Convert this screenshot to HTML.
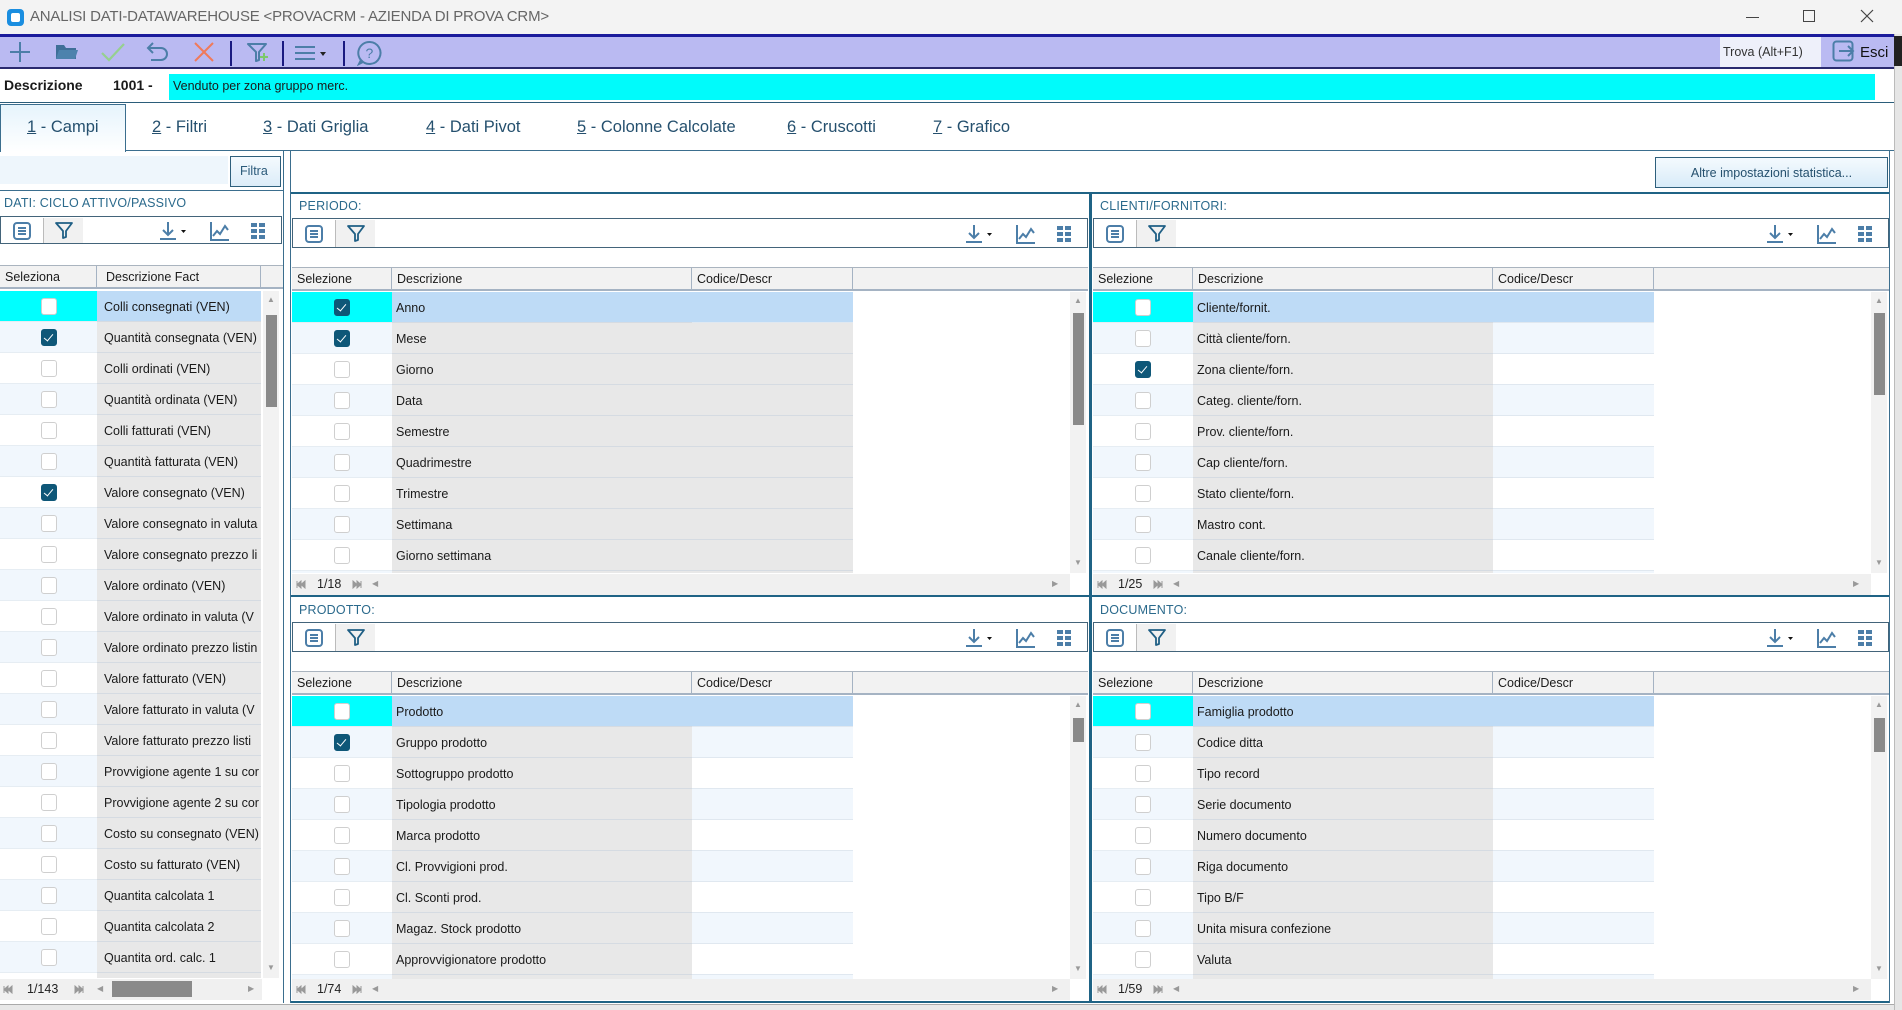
<!DOCTYPE html>
<html><head><meta charset="utf-8">
<style>
*{box-sizing:border-box;margin:0;padding:0}
body{width:1902px;height:1010px;position:relative;overflow:hidden;background:#fff;font-family:Tahoma,"Liberation Sans",sans-serif;font-size:13px;color:#1a1a1a}
.a{position:absolute}
.title{left:0;top:0;width:1902px;height:36px;background:#f3f3f3}
.tb{left:0;top:34px;width:1894px;height:35px;background:#babaf2;border-top:3px solid #1b1b9c;border-bottom:2px solid #2a2a70}
.sep{top:4px;width:2px;height:25px;background:#1a1a80}
.ico{stroke:#4c7ea8;fill:none;stroke-width:2}
.desc{left:0;top:69px;width:1894px;height:34px;border-bottom:1px solid #2b5d7a}
.tabs{left:0;top:103px;width:1894px;height:48px;border-bottom:1px solid #3b6e8e}
.tab{position:absolute;top:15px;font-size:16.5px;color:#25506e}
.tab u{text-decoration:underline}
.lbl{font-size:12.5px;color:#2b6a8c;letter-spacing:.2px}
.ptb{border:1px solid #43647a;height:30px;background:#fff}
.hdr{height:24px;background:#f2f2f2;border-top:1px solid #aab4bf;border-bottom:2px solid #a5b3c3;display:flex;font-size:12.5px}
.hdr span{border-right:1px solid #a5b3c3;padding:4px 5px;height:22px;white-space:nowrap}
.rows .r{display:flex;height:31px;font-size:12.5px}
.rows .r .s{background:#fff;display:flex;align-items:center;justify-content:center;border-bottom:1px solid #e6edf3}
.rows .r:nth-child(even) .s{background:#f1f7fd}
.rows .r .d{background:#e8e8e8;padding:9px 4px 0;white-space:nowrap;overflow:hidden;border-bottom:1px solid #d5dbe2}
.rows .r .c{background:#fff;border-bottom:1px solid #e0e8f0}
.rows .r:nth-child(even) .c{background:#f1f7fd}
.rows .r.g .c{background:#e8e8e8;border-bottom:1px solid #d5dbe2}
.rows .r.h .s{background:#00ffff}
.rows .r.h .d,.rows .r.h .c{background:#bedbf6}
.cb{width:16px;height:17px;border:1.5px solid #cfcfcf;border-radius:3px;background:#fff}
.cb.k{background:#0e5778;border-color:#0e5778;position:relative}
.cb.k:after{content:"";position:absolute;left:4px;top:2px;width:4px;height:8px;border:solid #fff;border-width:0 1.6px 1.6px 0;transform:rotate(40deg)}
.vs{width:16px;background:#f2f2f2}
.vs .th{position:absolute;left:3px;width:11px;background:#8a8a8a}
.pg{height:21px;background:#f0f0f0;font-size:12.5px;color:#222}
.arr{font-size:8px;color:#999}
</style></head><body>

<div class="a title">
 <div class="a" style="left:7px;top:9px;width:17px;height:17px;background:#1a8ee0;border-radius:4px"><div class="a" style="left:4px;top:4px;width:9px;height:9px;background:#fff;border-radius:2px"></div></div>
 <div class="a" style="left:30px;top:8px;font-size:15px;color:#666;font-family:'Liberation Sans',sans-serif;letter-spacing:-.2px">ANALISI DATI-DATAWAREHOUSE &lt;PROVACRM - AZIENDA DI PROVA CRM&gt;</div>
 <div class="a" style="left:1746px;top:17px;width:13px;height:1px;background:#444"></div>
 <div class="a" style="left:1803px;top:10px;width:12px;height:12px;border:1px solid #444"></div>
 <svg class="a" style="left:1860px;top:9px" width="14" height="14"><path d="M1 1L13 13M13 1L1 13" stroke="#444" stroke-width="1.2"/></svg>
</div>

<div class="a tb">
 <svg class="a" style="left:8px;top:3px" width="24" height="24"><path d="M12 2V22M2 12H22" stroke="#4c7ea8" stroke-width="2"/></svg>
 <svg class="a" style="left:55px;top:5px" width="24" height="20"><path d="M1 3H9L11 6H21V17H1Z" fill="#3f6f98"/><path d="M4 8H23L20 17H1Z" fill="#4d82ad"/></svg>
 <svg class="a" style="left:100px;top:4px" width="26" height="22"><path d="M2 12L9 19L24 3" stroke="#96d090" stroke-width="2.2" fill="none"/></svg>
 <svg class="a" style="left:145px;top:4px" width="26" height="22"><path d="M8 2L3 7L8 12M3 7H16A6 6 0 0 1 16 19H6" class="ico"/></svg>
 <svg class="a" style="left:192px;top:3px" width="24" height="24"><path d="M3 3L21 21M21 3L3 21" stroke="#f07a5a" stroke-width="2"/></svg>
 <div class="a sep" style="left:230px"></div>
 <svg class="a" style="left:246px;top:4px" width="26" height="24"><path d="M2 3H20L13 11V19L10 20V11Z" class="ico" stroke-linejoin="round"/><path d="M18 12V20M14 16H22" stroke="#7cc86c" stroke-width="2"/></svg>
 <div class="a sep" style="left:282px"></div>
 <svg class="a" style="left:293px;top:6px" width="40" height="20"><path d="M2 4H22M2 10H22M2 16H22" class="ico"/><path d="M27 9H33L30 13Z" fill="#222"/></svg>
 <div class="a sep" style="left:343px"></div>
 <svg class="a" style="left:357px;top:3px" width="26" height="26"><path d="M13 2A11 11 0 1 1 4 20L2 24L6 22A11 11 0 0 1 13 2Z" class="ico"/><text x="8.5" y="18" font-size="14" fill="#4c7ea8" font-family="Liberation Sans">?</text></svg>
 <div class="a" style="left:1720px;top:0;width:101px;height:30px;background:#eef0fa;padding:8px 0 0 3px;font-size:12.5px;color:#333">Trova (Alt+F1)</div>
 <svg class="a" style="left:1832px;top:3px" width="24" height="24"><rect x="1.5" y="1.5" width="19" height="19" rx="3" class="ico"/><path d="M7 11H21M16 6L21 11L16 16" class="ico" stroke="#3b6a94"/></svg>
 <div class="a" style="left:1860px;top:7px;font-size:15px;color:#111">Esci</div>
</div>
<div class="a" style="left:1894px;top:34px;width:8px;height:976px;background:#e6e6e6;border-left:1px solid #bbb"></div>
<div class="a" style="left:1894px;top:36px;width:8px;height:30px;background:#222"></div>

<div class="a desc">
 <div class="a" style="left:4px;top:8px;font-weight:bold;font-size:14px">Descrizione</div>
 <div class="a" style="left:113px;top:8px;font-weight:bold;font-size:14px">1001 -</div>
 <div class="a" style="left:169px;top:5px;width:1706px;height:26px;background:#00fbfb;padding:5px 4px;font-size:12.5px">Venduto per zona gruppo merc.</div>
</div>

<div class="a tabs">
 <div class="a" style="left:0;top:1px;width:126px;height:48px;background:linear-gradient(#e6f4fc,#fff);border:1px solid #3b6e8e;border-bottom:none"></div>
 <div class="tab" style="left:27px"><u>1</u> - Campi</div>
 <div class="tab" style="left:152px"><u>2</u> - Filtri</div>
 <div class="tab" style="left:263px"><u>3</u> - Dati Griglia</div>
 <div class="tab" style="left:426px"><u>4</u> - Dati Pivot</div>
 <div class="tab" style="left:577px"><u>5</u> - Colonne Calcolate</div>
 <div class="tab" style="left:787px"><u>6</u> - Cruscotti</div>
 <div class="tab" style="left:933px"><u>7</u> - Grafico</div>
</div>

<div class="a" style="left:0;top:156px;width:228px;height:28px;background:#eef6fc"></div>
<div class="a" style="left:230px;top:156px;width:51px;height:31px;border:1.5px solid #2e5f7c;background:linear-gradient(#f4fafe,#dcecf8);font-size:12.5px;color:#2b5a7a;padding:7px 0 0 9px">Filtra</div>
<div class="a" style="left:0;top:190px;width:284px;height:1px;background:#3b6e8e"></div>
<div class="a" style="left:283px;top:150px;width:1px;height:853px;background:#3b6e8e"></div>
<div class="a lbl" style="left:4px;top:196px">DATI: CICLO ATTIVO/PASSIVO</div>

<div class="a ptb" style="left:0;top:216px;width:282px;height:28px">
 <svg class="a" style="left:11px;top:4px" width="20" height="20"><rect x="2" y="2" width="16" height="16" rx="3" class="ico" stroke-width="1.6"/><path d="M6 7H14M6 10H14M6 13H14" class="ico" stroke-width="1.4"/></svg>
 <div class="a" style="left:42px;top:1px;width:40px;height:25px;background:#f1f1f1;border-left:1px solid #bbb"><svg class="a" style="left:10px;top:2px" width="20" height="20"><path d="M2 3H18L12 11V17L9 18V11Z" stroke="#1f5f85" stroke-width="1.8" fill="none" stroke-linejoin="round"/></svg></div>
 <svg class="a" style="left:157px;top:3px" width="32" height="22"><path d="M10 2V15M5 10L10 15L15 10M2 19H18" class="ico" stroke-width="1.5"/><path d="M23 10H28L25.5 13Z" fill="#111"/></svg>
 <svg class="a" style="left:208px;top:3px" width="22" height="22"><path d="M2 2V20H20M4 16L8 11L11 14L16 6L19 10" class="ico" stroke-width="1.4"/></svg>
 <svg class="a" style="left:249px;top:5px" width="18" height="18"><g fill="#4c7ea8"><rect x="1" y="1" width="6" height="4"/><rect x="9" y="1" width="6" height="4"/><rect x="1" y="7" width="6" height="4"/><rect x="9" y="7" width="6" height="4"/><rect x="1" y="13" width="6" height="4"/><rect x="9" y="13" width="6" height="4"/></g></svg>
</div>
<div class="a hdr" style="left:0;top:265px;width:283px"><span style="width:97px">Seleziona</span><span style="width:164px;padding-left:9px">Descrizione Fact</span></div>
<div class="a rows" style="left:0;top:291px;width:261px;height:687px;overflow:hidden">
 <div class="r h"><div class="s" style="width:97px"><div class="cb"></div></div><div class="d" style="width:164px;padding-left:7px">Colli consegnati (VEN)</div></div>
 <div class="r"><div class="s" style="width:97px"><div class="cb k"></div></div><div class="d" style="width:164px;padding-left:7px">Quantità consegnata (VEN)</div></div>
 <div class="r"><div class="s" style="width:97px"><div class="cb"></div></div><div class="d" style="width:164px;padding-left:7px">Colli ordinati (VEN)</div></div>
 <div class="r"><div class="s" style="width:97px"><div class="cb"></div></div><div class="d" style="width:164px;padding-left:7px">Quantità ordinata (VEN)</div></div>
 <div class="r"><div class="s" style="width:97px"><div class="cb"></div></div><div class="d" style="width:164px;padding-left:7px">Colli fatturati (VEN)</div></div>
 <div class="r"><div class="s" style="width:97px"><div class="cb"></div></div><div class="d" style="width:164px;padding-left:7px">Quantità fatturata (VEN)</div></div>
 <div class="r"><div class="s" style="width:97px"><div class="cb k"></div></div><div class="d" style="width:164px;padding-left:7px">Valore consegnato (VEN)</div></div>
 <div class="r"><div class="s" style="width:97px"><div class="cb"></div></div><div class="d" style="width:164px;padding-left:7px">Valore consegnato in valuta</div></div>
 <div class="r"><div class="s" style="width:97px"><div class="cb"></div></div><div class="d" style="width:164px;padding-left:7px">Valore consegnato prezzo li</div></div>
 <div class="r"><div class="s" style="width:97px"><div class="cb"></div></div><div class="d" style="width:164px;padding-left:7px">Valore ordinato (VEN)</div></div>
 <div class="r"><div class="s" style="width:97px"><div class="cb"></div></div><div class="d" style="width:164px;padding-left:7px">Valore ordinato in valuta (V</div></div>
 <div class="r"><div class="s" style="width:97px"><div class="cb"></div></div><div class="d" style="width:164px;padding-left:7px">Valore ordinato prezzo listin</div></div>
 <div class="r"><div class="s" style="width:97px"><div class="cb"></div></div><div class="d" style="width:164px;padding-left:7px">Valore fatturato (VEN)</div></div>
 <div class="r"><div class="s" style="width:97px"><div class="cb"></div></div><div class="d" style="width:164px;padding-left:7px">Valore fatturato in valuta (V</div></div>
 <div class="r"><div class="s" style="width:97px"><div class="cb"></div></div><div class="d" style="width:164px;padding-left:7px">Valore fatturato prezzo listi</div></div>
 <div class="r"><div class="s" style="width:97px"><div class="cb"></div></div><div class="d" style="width:164px;padding-left:7px">Provvigione agente 1 su cor</div></div>
 <div class="r"><div class="s" style="width:97px"><div class="cb"></div></div><div class="d" style="width:164px;padding-left:7px">Provvigione agente 2 su cor</div></div>
 <div class="r"><div class="s" style="width:97px"><div class="cb"></div></div><div class="d" style="width:164px;padding-left:7px">Costo su consegnato (VEN)</div></div>
 <div class="r"><div class="s" style="width:97px"><div class="cb"></div></div><div class="d" style="width:164px;padding-left:7px">Costo su fatturato (VEN)</div></div>
 <div class="r"><div class="s" style="width:97px"><div class="cb"></div></div><div class="d" style="width:164px;padding-left:7px">Quantita calcolata 1</div></div>
 <div class="r"><div class="s" style="width:97px"><div class="cb"></div></div><div class="d" style="width:164px;padding-left:7px">Quantita calcolata 2</div></div>
 <div class="r"><div class="s" style="width:97px"><div class="cb"></div></div><div class="d" style="width:164px;padding-left:7px">Quantita ord. calc. 1</div></div>
 <div class="r"><div class="s" style="width:97px"><div class="cb"></div></div><div class="d" style="width:164px;padding-left:7px">Quantita ord. calc. 2</div></div>
</div>
<div class="a vs" style="left:263px;top:291px;height:687px"><div class="a arr" style="left:4px;top:4px">▲</div><div class="th" style="top:24px;height:92px"></div><div class="a arr" style="left:4px;top:672px">▼</div></div>
<div class="a pg" style="left:0;top:979px;width:262px">
 <svg class="a" style="left:3px;top:6px" width="10" height="9"><path d="M1 1V8M9 1L5 4.5L9 8ZM5 1L1 4.5L5 8Z" stroke="#999" fill="#999" stroke-width="1"/></svg>
 <span class="a" style="left:27px;top:3px">1/143</span>
 <svg class="a" style="left:74px;top:6px" width="10" height="9"><path d="M9 1V8M1 1L5 4.5L1 8ZM5 1L9 4.5L5 8Z" stroke="#999" fill="#999" stroke-width="1"/></svg>
 <span class="a arr" style="left:97px;top:5px">◀</span><div class="a" style="left:112px;top:2px;width:80px;height:16px;background:#8a8a8a"></div><span class="a arr" style="left:248px;top:5px">▶</span></div>

<div class="a" style="left:290px;top:150px;width:1600px;height:853px;border:1px solid #3b6e8e;border-top:none"></div>
<div class="a" style="left:1655px;top:157px;width:233px;height:31px;border:1.5px solid #2e5f7c;background:linear-gradient(#f4fafe,#d8ebf8);font-size:12.5px;color:#25506e;text-align:center;padding-top:8px">Altre impostazioni statistica...</div>
<div class="a" style="left:291px;top:192px;width:1598px;height:2px;background:#1f6385"></div>
<div class="a" style="left:291px;top:595px;width:1598px;height:2px;background:#1f6385"></div>
<div class="a" style="left:1089px;top:192px;width:3px;height:811px;background:#1f6385"></div>
<div class="a" style="left:291px;top:1001px;width:1598px;height:2px;background:#1f6385"></div>
<div class="a" style="left:0;top:1004px;width:1894px;height:6px;background:#e8e8e8;border-top:1px solid #aaa"></div>

<div class="a lbl" style="left:299px;top:199px">PERIODO:</div>
<div class="a lbl" style="left:1100px;top:199px">CLIENTI/FORNITORI:</div>
<div class="a lbl" style="left:299px;top:603px">PRODOTTO:</div>
<div class="a lbl" style="left:1100px;top:603px">DOCUMENTO:</div>

<div class="a ptb" style="left:292px;top:218px;width:796px">
 <svg class="a" style="left:11px;top:5px" width="20" height="20"><rect x="2" y="2" width="16" height="16" rx="3" class="ico" stroke-width="1.6"/><path d="M6 7H14M6 10H14M6 13H14" class="ico" stroke-width="1.4"/></svg>
 <div class="a" style="left:42px;top:1px;width:40px;height:27px;background:#f1f1f1;border-left:1px solid #bbb"><svg class="a" style="left:10px;top:3px" width="20" height="20"><path d="M2 3H18L12 11V17L9 18V11Z" stroke="#1f5f85" stroke-width="1.8" fill="none" stroke-linejoin="round"/></svg></div>
 <svg class="a" style="left:671px;top:4px" width="32" height="22"><path d="M10 2V15M5 10L10 15L15 10M2 19H18" class="ico" stroke-width="1.5"/><path d="M23 10H28L25.5 13Z" fill="#111"/></svg>
 <svg class="a" style="left:722px;top:4px" width="22" height="22"><path d="M2 2V20H20M4 16L8 11L11 14L16 6L19 10" class="ico" stroke-width="1.4"/></svg>
 <svg class="a" style="left:763px;top:6px" width="18" height="18"><g fill="#4c7ea8"><rect x="1" y="1" width="6" height="4"/><rect x="9" y="1" width="6" height="4"/><rect x="1" y="7" width="6" height="4"/><rect x="9" y="7" width="6" height="4"/><rect x="1" y="13" width="6" height="4"/><rect x="9" y="13" width="6" height="4"/></g></svg>
</div>
<div class="a ptb" style="left:1093px;top:218px;width:796px">
 <svg class="a" style="left:11px;top:5px" width="20" height="20"><rect x="2" y="2" width="16" height="16" rx="3" class="ico" stroke-width="1.6"/><path d="M6 7H14M6 10H14M6 13H14" class="ico" stroke-width="1.4"/></svg>
 <div class="a" style="left:42px;top:1px;width:40px;height:27px;background:#f1f1f1;border-left:1px solid #bbb"><svg class="a" style="left:10px;top:3px" width="20" height="20"><path d="M2 3H18L12 11V17L9 18V11Z" stroke="#1f5f85" stroke-width="1.8" fill="none" stroke-linejoin="round"/></svg></div>
 <svg class="a" style="left:671px;top:4px" width="32" height="22"><path d="M10 2V15M5 10L10 15L15 10M2 19H18" class="ico" stroke-width="1.5"/><path d="M23 10H28L25.5 13Z" fill="#111"/></svg>
 <svg class="a" style="left:722px;top:4px" width="22" height="22"><path d="M2 2V20H20M4 16L8 11L11 14L16 6L19 10" class="ico" stroke-width="1.4"/></svg>
 <svg class="a" style="left:763px;top:6px" width="18" height="18"><g fill="#4c7ea8"><rect x="1" y="1" width="6" height="4"/><rect x="9" y="1" width="6" height="4"/><rect x="1" y="7" width="6" height="4"/><rect x="9" y="7" width="6" height="4"/><rect x="1" y="13" width="6" height="4"/><rect x="9" y="13" width="6" height="4"/></g></svg>
</div>
<div class="a ptb" style="left:292px;top:622px;width:796px">
 <svg class="a" style="left:11px;top:5px" width="20" height="20"><rect x="2" y="2" width="16" height="16" rx="3" class="ico" stroke-width="1.6"/><path d="M6 7H14M6 10H14M6 13H14" class="ico" stroke-width="1.4"/></svg>
 <div class="a" style="left:42px;top:1px;width:40px;height:27px;background:#f1f1f1;border-left:1px solid #bbb"><svg class="a" style="left:10px;top:3px" width="20" height="20"><path d="M2 3H18L12 11V17L9 18V11Z" stroke="#1f5f85" stroke-width="1.8" fill="none" stroke-linejoin="round"/></svg></div>
 <svg class="a" style="left:671px;top:4px" width="32" height="22"><path d="M10 2V15M5 10L10 15L15 10M2 19H18" class="ico" stroke-width="1.5"/><path d="M23 10H28L25.5 13Z" fill="#111"/></svg>
 <svg class="a" style="left:722px;top:4px" width="22" height="22"><path d="M2 2V20H20M4 16L8 11L11 14L16 6L19 10" class="ico" stroke-width="1.4"/></svg>
 <svg class="a" style="left:763px;top:6px" width="18" height="18"><g fill="#4c7ea8"><rect x="1" y="1" width="6" height="4"/><rect x="9" y="1" width="6" height="4"/><rect x="1" y="7" width="6" height="4"/><rect x="9" y="7" width="6" height="4"/><rect x="1" y="13" width="6" height="4"/><rect x="9" y="13" width="6" height="4"/></g></svg>
</div>
<div class="a ptb" style="left:1093px;top:622px;width:796px">
 <svg class="a" style="left:11px;top:5px" width="20" height="20"><rect x="2" y="2" width="16" height="16" rx="3" class="ico" stroke-width="1.6"/><path d="M6 7H14M6 10H14M6 13H14" class="ico" stroke-width="1.4"/></svg>
 <div class="a" style="left:42px;top:1px;width:40px;height:27px;background:#f1f1f1;border-left:1px solid #bbb"><svg class="a" style="left:10px;top:3px" width="20" height="20"><path d="M2 3H18L12 11V17L9 18V11Z" stroke="#1f5f85" stroke-width="1.8" fill="none" stroke-linejoin="round"/></svg></div>
 <svg class="a" style="left:671px;top:4px" width="32" height="22"><path d="M10 2V15M5 10L10 15L15 10M2 19H18" class="ico" stroke-width="1.5"/><path d="M23 10H28L25.5 13Z" fill="#111"/></svg>
 <svg class="a" style="left:722px;top:4px" width="22" height="22"><path d="M2 2V20H20M4 16L8 11L11 14L16 6L19 10" class="ico" stroke-width="1.4"/></svg>
 <svg class="a" style="left:763px;top:6px" width="18" height="18"><g fill="#4c7ea8"><rect x="1" y="1" width="6" height="4"/><rect x="9" y="1" width="6" height="4"/><rect x="1" y="7" width="6" height="4"/><rect x="9" y="7" width="6" height="4"/><rect x="1" y="13" width="6" height="4"/><rect x="9" y="13" width="6" height="4"/></g></svg>
</div>

<div class="a hdr" style="left:292px;top:267px;width:796px"><span style="width:100px">Selezione</span><span style="width:300px">Descrizione</span><span style="width:161px">Codice/Descr</span></div>
<div class="a hdr" style="left:1093px;top:267px;width:796px"><span style="width:100px">Selezione</span><span style="width:300px">Descrizione</span><span style="width:161px">Codice/Descr</span></div>
<div class="a hdr" style="left:292px;top:671px;width:796px"><span style="width:100px">Selezione</span><span style="width:300px">Descrizione</span><span style="width:161px">Codice/Descr</span></div>
<div class="a hdr" style="left:1093px;top:671px;width:796px"><span style="width:100px">Selezione</span><span style="width:300px">Descrizione</span><span style="width:161px">Codice/Descr</span></div>

<div class="a rows" style="left:292px;top:292px;width:561px;height:281px;overflow:hidden">
 <div class="r h"><div class="s" style="width:100px"><div class="cb k"></div></div><div class="d" style="width:300px">Anno</div><div class="c" style="width:161px"></div></div>
 <div class="r g"><div class="s" style="width:100px"><div class="cb k"></div></div><div class="d" style="width:300px">Mese</div><div class="c" style="width:161px"></div></div>
 <div class="r g"><div class="s" style="width:100px"><div class="cb"></div></div><div class="d" style="width:300px">Giorno</div><div class="c" style="width:161px"></div></div>
 <div class="r g"><div class="s" style="width:100px"><div class="cb"></div></div><div class="d" style="width:300px">Data</div><div class="c" style="width:161px"></div></div>
 <div class="r g"><div class="s" style="width:100px"><div class="cb"></div></div><div class="d" style="width:300px">Semestre</div><div class="c" style="width:161px"></div></div>
 <div class="r g"><div class="s" style="width:100px"><div class="cb"></div></div><div class="d" style="width:300px">Quadrimestre</div><div class="c" style="width:161px"></div></div>
 <div class="r g"><div class="s" style="width:100px"><div class="cb"></div></div><div class="d" style="width:300px">Trimestre</div><div class="c" style="width:161px"></div></div>
 <div class="r g"><div class="s" style="width:100px"><div class="cb"></div></div><div class="d" style="width:300px">Settimana</div><div class="c" style="width:161px"></div></div>
 <div class="r g"><div class="s" style="width:100px"><div class="cb"></div></div><div class="d" style="width:300px">Giorno settimana</div><div class="c" style="width:161px"></div></div>
 <div class="r g"><div class="s" style="width:100px"><div class="cb"></div></div><div class="d" style="width:300px">Ora</div><div class="c" style="width:161px"></div></div>
</div>

<div class="a rows" style="left:1093px;top:292px;width:561px;height:281px;overflow:hidden">
 <div class="r h"><div class="s" style="width:100px"><div class="cb"></div></div><div class="d" style="width:300px">Cliente/fornit.</div><div class="c" style="width:161px"></div></div>
 <div class="r"><div class="s" style="width:100px"><div class="cb"></div></div><div class="d" style="width:300px">Città cliente/forn.</div><div class="c" style="width:161px"></div></div>
 <div class="r"><div class="s" style="width:100px"><div class="cb k"></div></div><div class="d" style="width:300px">Zona cliente/forn.</div><div class="c" style="width:161px"></div></div>
 <div class="r"><div class="s" style="width:100px"><div class="cb"></div></div><div class="d" style="width:300px">Categ. cliente/forn.</div><div class="c" style="width:161px"></div></div>
 <div class="r"><div class="s" style="width:100px"><div class="cb"></div></div><div class="d" style="width:300px">Prov. cliente/forn.</div><div class="c" style="width:161px"></div></div>
 <div class="r"><div class="s" style="width:100px"><div class="cb"></div></div><div class="d" style="width:300px">Cap cliente/forn.</div><div class="c" style="width:161px"></div></div>
 <div class="r"><div class="s" style="width:100px"><div class="cb"></div></div><div class="d" style="width:300px">Stato cliente/forn.</div><div class="c" style="width:161px"></div></div>
 <div class="r"><div class="s" style="width:100px"><div class="cb"></div></div><div class="d" style="width:300px">Mastro cont.</div><div class="c" style="width:161px"></div></div>
 <div class="r"><div class="s" style="width:100px"><div class="cb"></div></div><div class="d" style="width:300px">Canale cliente/forn.</div><div class="c" style="width:161px"></div></div>
 <div class="r"><div class="s" style="width:100px"><div class="cb"></div></div><div class="d" style="width:300px">Agente</div><div class="c" style="width:161px"></div></div>
</div>

<div class="a rows" style="left:292px;top:696px;width:561px;height:283px;overflow:hidden">
 <div class="r h"><div class="s" style="width:100px"><div class="cb"></div></div><div class="d" style="width:300px">Prodotto</div><div class="c" style="width:161px"></div></div>
 <div class="r"><div class="s" style="width:100px"><div class="cb k"></div></div><div class="d" style="width:300px">Gruppo prodotto</div><div class="c" style="width:161px"></div></div>
 <div class="r"><div class="s" style="width:100px"><div class="cb"></div></div><div class="d" style="width:300px">Sottogruppo prodotto</div><div class="c" style="width:161px"></div></div>
 <div class="r"><div class="s" style="width:100px"><div class="cb"></div></div><div class="d" style="width:300px">Tipologia prodotto</div><div class="c" style="width:161px"></div></div>
 <div class="r"><div class="s" style="width:100px"><div class="cb"></div></div><div class="d" style="width:300px">Marca prodotto</div><div class="c" style="width:161px"></div></div>
 <div class="r"><div class="s" style="width:100px"><div class="cb"></div></div><div class="d" style="width:300px">Cl. Provvigioni prod.</div><div class="c" style="width:161px"></div></div>
 <div class="r"><div class="s" style="width:100px"><div class="cb"></div></div><div class="d" style="width:300px">Cl. Sconti prod.</div><div class="c" style="width:161px"></div></div>
 <div class="r"><div class="s" style="width:100px"><div class="cb"></div></div><div class="d" style="width:300px">Magaz. Stock prodotto</div><div class="c" style="width:161px"></div></div>
 <div class="r"><div class="s" style="width:100px"><div class="cb"></div></div><div class="d" style="width:300px">Approvvigionatore prodotto</div><div class="c" style="width:161px"></div></div>
 <div class="r"><div class="s" style="width:100px"><div class="cb"></div></div><div class="d" style="width:300px">Fornitore</div><div class="c" style="width:161px"></div></div>
</div>

<div class="a rows" style="left:1093px;top:696px;width:561px;height:283px;overflow:hidden">
 <div class="r h"><div class="s" style="width:100px"><div class="cb"></div></div><div class="d" style="width:300px">Famiglia prodotto</div><div class="c" style="width:161px"></div></div>
 <div class="r"><div class="s" style="width:100px"><div class="cb"></div></div><div class="d" style="width:300px">Codice ditta</div><div class="c" style="width:161px"></div></div>
 <div class="r"><div class="s" style="width:100px"><div class="cb"></div></div><div class="d" style="width:300px">Tipo record</div><div class="c" style="width:161px"></div></div>
 <div class="r"><div class="s" style="width:100px"><div class="cb"></div></div><div class="d" style="width:300px">Serie documento</div><div class="c" style="width:161px"></div></div>
 <div class="r"><div class="s" style="width:100px"><div class="cb"></div></div><div class="d" style="width:300px">Numero documento</div><div class="c" style="width:161px"></div></div>
 <div class="r"><div class="s" style="width:100px"><div class="cb"></div></div><div class="d" style="width:300px">Riga documento</div><div class="c" style="width:161px"></div></div>
 <div class="r"><div class="s" style="width:100px"><div class="cb"></div></div><div class="d" style="width:300px">Tipo B/F</div><div class="c" style="width:161px"></div></div>
 <div class="r"><div class="s" style="width:100px"><div class="cb"></div></div><div class="d" style="width:300px">Unita misura confezione</div><div class="c" style="width:161px"></div></div>
 <div class="r"><div class="s" style="width:100px"><div class="cb"></div></div><div class="d" style="width:300px">Valuta</div><div class="c" style="width:161px"></div></div>
 <div class="r"><div class="s" style="width:100px"><div class="cb"></div></div><div class="d" style="width:300px">Causale</div><div class="c" style="width:161px"></div></div>
</div>

<div class="a vs" style="left:1070px;top:292px;height:281px"><div class="a arr" style="left:4px;top:4px">▲</div><div class="th" style="top:21px;height:112px"></div><div class="a arr" style="left:4px;top:266px">▼</div></div>
<div class="a vs" style="left:1871px;top:292px;height:281px"><div class="a arr" style="left:4px;top:4px">▲</div><div class="th" style="top:21px;height:82px"></div><div class="a arr" style="left:4px;top:266px">▼</div></div>
<div class="a vs" style="left:1070px;top:696px;height:283px"><div class="a arr" style="left:4px;top:4px">▲</div><div class="th" style="top:22px;height:24px"></div><div class="a arr" style="left:4px;top:268px">▼</div></div>
<div class="a vs" style="left:1871px;top:696px;height:283px"><div class="a arr" style="left:4px;top:4px">▲</div><div class="th" style="top:22px;height:34px"></div><div class="a arr" style="left:4px;top:268px">▼</div></div>

<div class="a pg" style="left:292px;top:574px;width:778px"><svg class="a" style="left:4px;top:6px" width="10" height="9"><path d="M1 1V8M9 1L5 4.5L9 8ZM5 1L1 4.5L5 8Z" stroke="#999" fill="#999"/></svg><span class="a" style="left:25px;top:3px">1/18</span><svg class="a" style="left:60px;top:6px" width="10" height="9"><path d="M9 1V8M1 1L5 4.5L1 8ZM5 1L9 4.5L5 8Z" stroke="#999" fill="#999"/></svg><span class="a arr" style="left:80px;top:5px">◀</span><span class="a arr" style="left:760px;top:5px">▶</span></div>
<div class="a pg" style="left:1093px;top:574px;width:778px"><svg class="a" style="left:4px;top:6px" width="10" height="9"><path d="M1 1V8M9 1L5 4.5L9 8ZM5 1L1 4.5L5 8Z" stroke="#999" fill="#999"/></svg><span class="a" style="left:25px;top:3px">1/25</span><svg class="a" style="left:60px;top:6px" width="10" height="9"><path d="M9 1V8M1 1L5 4.5L1 8ZM5 1L9 4.5L5 8Z" stroke="#999" fill="#999"/></svg><span class="a arr" style="left:80px;top:5px">◀</span><span class="a arr" style="left:760px;top:5px">▶</span></div>
<div class="a pg" style="left:292px;top:979px;width:778px"><svg class="a" style="left:4px;top:6px" width="10" height="9"><path d="M1 1V8M9 1L5 4.5L9 8ZM5 1L1 4.5L5 8Z" stroke="#999" fill="#999"/></svg><span class="a" style="left:25px;top:3px">1/74</span><svg class="a" style="left:60px;top:6px" width="10" height="9"><path d="M9 1V8M1 1L5 4.5L1 8ZM5 1L9 4.5L5 8Z" stroke="#999" fill="#999"/></svg><span class="a arr" style="left:80px;top:5px">◀</span><span class="a arr" style="left:760px;top:5px">▶</span></div>
<div class="a pg" style="left:1093px;top:979px;width:778px"><svg class="a" style="left:4px;top:6px" width="10" height="9"><path d="M1 1V8M9 1L5 4.5L9 8ZM5 1L1 4.5L5 8Z" stroke="#999" fill="#999"/></svg><span class="a" style="left:25px;top:3px">1/59</span><svg class="a" style="left:60px;top:6px" width="10" height="9"><path d="M9 1V8M1 1L5 4.5L1 8ZM5 1L9 4.5L5 8Z" stroke="#999" fill="#999"/></svg><span class="a arr" style="left:80px;top:5px">◀</span><span class="a arr" style="left:760px;top:5px">▶</span></div>

</body></html>
